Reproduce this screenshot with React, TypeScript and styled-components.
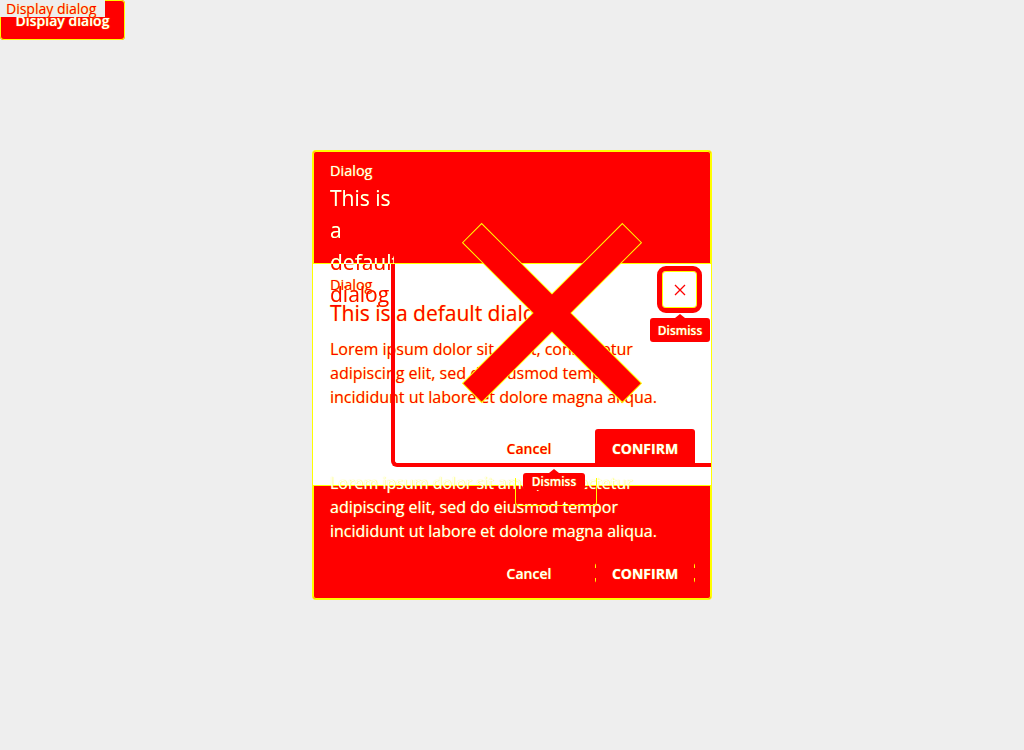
import * as React from 'react';
import styled, {createGlobalStyle} from 'styled-components';

const RED = '#ff0000';
const YELLOW = '#ffff00';

const GlobalStyle = createGlobalStyle`
  html, body {
    margin: 0;
    padding: 0;
    background: #eeeeee;
    font-family: "Open Sans", "Liberation Sans", sans-serif;
  }
`;

const Page = styled.div`
  position: relative;
  width: 1024px;
  height: 750px;
`;

const TriggerButton = styled.button`
  display: flex;
  align-items: center;
  justify-content: center;
  width: 125px;
  height: 40px;
  margin: 0;
  padding: 1px 0 0;
  border: none;
  border-radius: 4px;
  background: ${RED};
  box-shadow: 0 0 0 1px ${YELLOW} inset;
  color: #fff;
  font-family: inherit;
  font-size: 14px;
  font-weight: 600;
  text-shadow: 0 0 1px ${YELLOW};
`;

const GhostLabel = styled.div`
  position: absolute;
  left: 0;
  top: 0;
  width: 99px;
  height: 17px;
  padding-left: 6px;
  background: #eeeeee;
  color: ${RED};
  font-size: 14px;
  line-height: 17px;
  text-shadow: 0 0 1px ${YELLOW};
`;

const Overlay = styled.div`
  position: absolute;
  inset: 0;
  display: flex;
  align-items: center;
  justify-content: center;
`;

const Card = styled.div`
  position: relative;
  width: 398px;
  height: 448px;
  display: flex;
  flex-direction: column;
  background: #fff;
  border-radius: 3px;
  box-shadow: 0 0 0 1px ${YELLOW};
`;

const Band = styled.div<{ $height: number }>`
  height: ${(p) => p.$height}px;
  flex: none;
  background: ${RED};
  color: #fff;
  text-shadow: 0 0 1px ${YELLOW};
  box-shadow: 0 0 0 1px ${YELLOW} inset;
`;

const TopBand = styled(Band)`
  padding: 11px 17px 0;
  box-sizing: border-box;
  border-radius: 3px 3px 0 0;
  position: relative;
  z-index: 1;
`;

const BottomBand = styled(Band)`
  padding: 0 16px 16px 17px;
  box-sizing: border-box;
  border-radius: 0 0 3px 3px;
  display: flex;
  flex-direction: column;
`;

const Middle = styled.div`
  flex: 1;
  padding: 12px 16px 18px 17px;
  color: ${RED};
  text-shadow: 0 0 1px ${YELLOW};
  display: flex;
  flex-direction: column;
`;

const Eyebrow = styled.div`
  font-size: 14.5px;
  line-height: 18px;
`;

const Heading = styled.div`
  font-size: 21px;
  line-height: 28px;
  margin-top: 5px;
`;

/* the narrow copy of the heading: white inside the band, red where it runs below it */
const NarrowHeading = styled.div`
  font-size: 21px;
  line-height: 32px;
  margin-top: 2px;
  width: 64px;
  overflow: hidden;
  color: transparent;
  background: linear-gradient(#fff 0 82px, ${RED} 82px);
  -webkit-background-clip: text;
  background-clip: text;
  text-shadow: none;
  filter: drop-shadow(0 0 0.6px ${YELLOW});
`;

const Body = styled.p<{ $lift?: boolean }>`
  margin: ${(p) => (p.$lift ? '-14px 0 0' : '10px 0 0')};
  font-size: 16px;
  line-height: 24px;
`;

const Actions = styled.div`
  display: flex;
  justify-content: flex-end;
  align-items: center;
  margin-top: 20px;
`;

const TextButton = styled.button`
  width: 90px;
  margin-right: 21px;
  padding: 0;
  border: none;
  background: transparent;
  color: inherit;
  font-family: inherit;
  font-size: 14px;
  font-weight: 600;
  text-shadow: inherit;
`;

const ConfirmButton = styled.button<{ $ghost?: boolean }>`
  width: 100px;
  height: ${(p) => (p.$ghost ? 20 : 38)}px;
  padding: 0;
  border: none;
  border-radius: 3px;
  color: #fff;
  font-family: inherit;
  font-size: 14px;
  font-weight: 700;
  text-shadow: 0 0 1px ${YELLOW};
  background: ${(p) =>
    p.$ghost
      ? `linear-gradient(${YELLOW}, ${YELLOW}) left top / 1px 5px no-repeat,
         linear-gradient(${YELLOW}, ${YELLOW}) right top / 1px 5px no-repeat,
         linear-gradient(${YELLOW}, ${YELLOW}) left bottom / 1px 5px no-repeat,
         linear-gradient(${YELLOW}, ${YELLOW}) right bottom / 1px 5px no-repeat`
      : RED};
`;

const InnerFrame = styled.div`
  position: absolute;
  left: 78px;
  top: 113px;
  width: 316px;
  height: 199px;
  border-left: 4px solid ${RED};
  border-bottom: 4px solid ${RED};
  border-bottom-left-radius: 6px;
  pointer-events: none;
  z-index: 2;
`;

const CrossMark = styled.svg`
  position: absolute;
  left: 146px;
  top: 69px;
  width: 186px;
  height: 186px;
  z-index: 3;
  pointer-events: none;
`;

const CloseButton = styled.button`
  position: absolute;
  left: 344px;
  top: 115px;
  width: 45px;
  height: 47px;
  box-sizing: border-box;
  display: flex;
  align-items: center;
  justify-content: center;
  padding: 0;
  background: #fff;
  border: 5px solid ${RED};
  border-radius: 9px;
  box-shadow: 0 0 0 1px ${YELLOW} inset;
  z-index: 4;
`;

const Tooltip = styled.div<{ $x: number; $y: number; $w: number; $h: number }>`
  position: absolute;
  left: ${(p) => p.$x}px;
  top: ${(p) => p.$y}px;
  width: ${(p) => p.$w}px;
  height: ${(p) => p.$h}px;
  display: flex;
  align-items: center;
  justify-content: center;
  background: ${RED};
  border-radius: 3px;
  color: #fff;
  font-size: 12px;
  font-weight: 600;
  text-shadow: 0 0 1px ${YELLOW};
  z-index: 4;

  &::before {
    content: '';
    position: absolute;
    top: -4px;
    left: 50%;
    margin-left: -5px;
    border: 5px solid transparent;
    border-top: none;
    border-bottom: 4px solid ${RED};
  }
`;

const TooltipGhost = styled.div`
  position: absolute;
  left: 202px;
  top: 327px;
  width: 80px;
  height: 27px;
  border: 1px solid ${YELLOW};
  border-top: none;
  border-radius: 0 0 4px 4px;
  z-index: 4;
`;

const lorem =
  'Lorem ipsum dolor sit amet, consectetur adipiscing elit, sed do eiusmod tempor incididunt ut labore et dolore magna aliqua.';

const crossPath =
  'M-13.5,-113 L13.5,-113 L13.5,-13.5 L113,-13.5 L113,13.5 L13.5,13.5 L13.5,113 L-13.5,113 L-13.5,13.5 L-113,13.5 L-113,-13.5 L-13.5,-13.5 Z';

export default function App() {
  return (
    <Page>
      <GlobalStyle />
      <TriggerButton>Display dialog</TriggerButton>
      <GhostLabel>Display dialog</GhostLabel>
      <Overlay>
        <Card role="dialog">
          <TopBand $height={113}>
            <Eyebrow>Dialog</Eyebrow>
            <NarrowHeading>This is a default dialog</NarrowHeading>
          </TopBand>
          <Middle>
            <Eyebrow>Dialog</Eyebrow>
            <Heading>This is a default dialog</Heading>
            <Body>{lorem}</Body>
            <Actions>
              <TextButton>Cancel</TextButton>
              <ConfirmButton>CONFIRM</ConfirmButton>
            </Actions>
          </Middle>
          <BottomBand $height={114}>
            <Body $lift>{lorem}</Body>
            <Actions>
              <TextButton>Cancel</TextButton>
              <ConfirmButton $ghost>CONFIRM</ConfirmButton>
            </Actions>
          </BottomBand>

          <InnerFrame />
          <CrossMark viewBox="-93 -93 186 186">
            <path d={crossPath} transform="rotate(45)" fill={RED} stroke={YELLOW} strokeWidth="1" />
          </CrossMark>
          <CloseButton aria-label="Dismiss">
            <svg width="12" height="12" viewBox="0 0 12 12">
              <path d="M1 1 L11 11 M11 1 L1 11" stroke={RED} strokeWidth="1.3" />
            </svg>
          </CloseButton>
          <Tooltip $x={337} $y={167} $w={60} $h={24}>Dismiss</Tooltip>
          <Tooltip $x={210} $y={322} $w={62} $h={17}>Dismiss</Tooltip>
          <TooltipGhost />
        </Card>
      </Overlay>
    </Page>
  );
}
